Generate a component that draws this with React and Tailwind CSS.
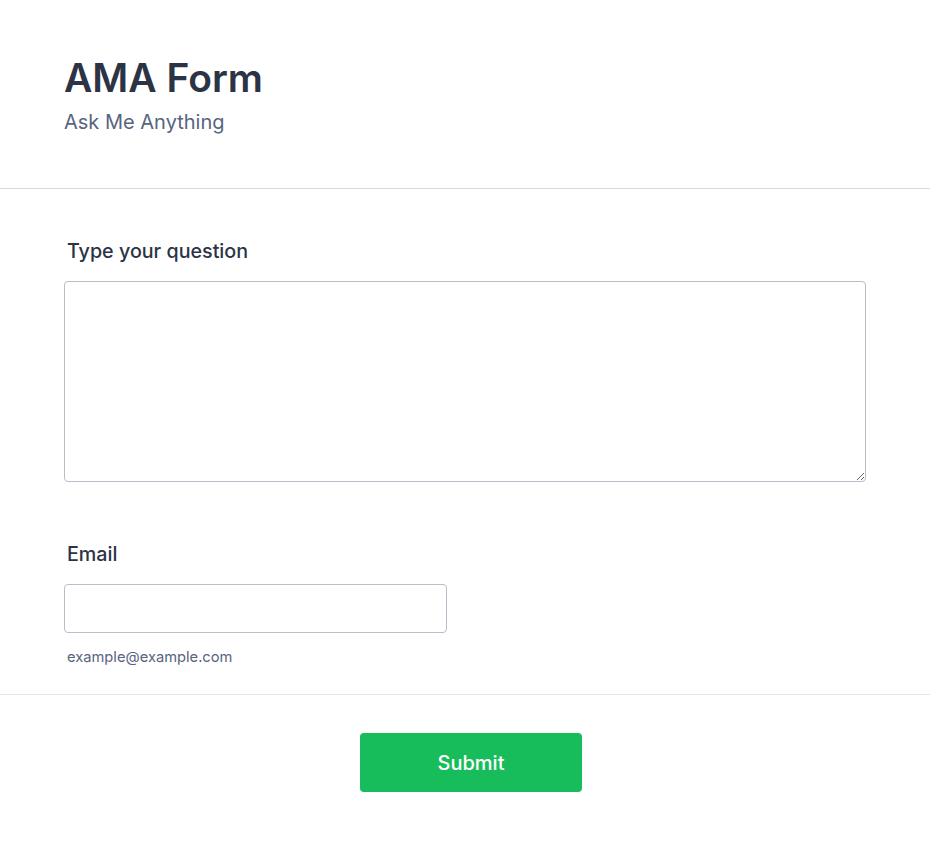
export default function App() {
  return (
    <div className="min-h-screen bg-white text-[#2c3345]" style={{ fontFamily: "Inter, 'Noto Sans', sans-serif" }}>
      <div className="px-16 pt-[54px] pb-[52px] border-b border-[#d8d8e6]">
        <h1 className="text-[39px] leading-[48px] font-semibold text-[#2c3345]">AMA Form</h1>
        <p className="mt-[6px] text-[20px] leading-[28px] text-[#57647e]">Ask Me Anything</p>
      </div>

      <div className="px-16 pt-[48px]">
        <label className="block pl-[3px] text-[19.7px] leading-[28px] font-medium text-[#2c3345]">Type your question</label>
        <textarea className="mt-[16px] block w-full h-[201px] rounded border border-[#b8bdc9] bg-white" />
      </div>

      <div className="px-16 pt-[58px] pb-[28px] border-b border-[#e6e6f0]">
        <label className="block pl-[3px] text-[19.7px] leading-[28px] font-medium text-[#2c3345]">Email</label>
        <input type="email" className="mt-[16px] block w-[383px] h-[49px] rounded border border-[#b8bdc9] bg-white" />
        <div className="mt-[15px] pl-[3px] text-[14.7px] leading-[18px] text-[#57647e]">example@example.com</div>
      </div>

      <div className="flex justify-center pl-3 pt-[38px] pb-[50px]">
        <button className="w-[222px] h-[59px] rounded bg-[#18bd5b] text-white text-[20px] font-medium">Submit</button>
      </div>
    </div>
  );
}
